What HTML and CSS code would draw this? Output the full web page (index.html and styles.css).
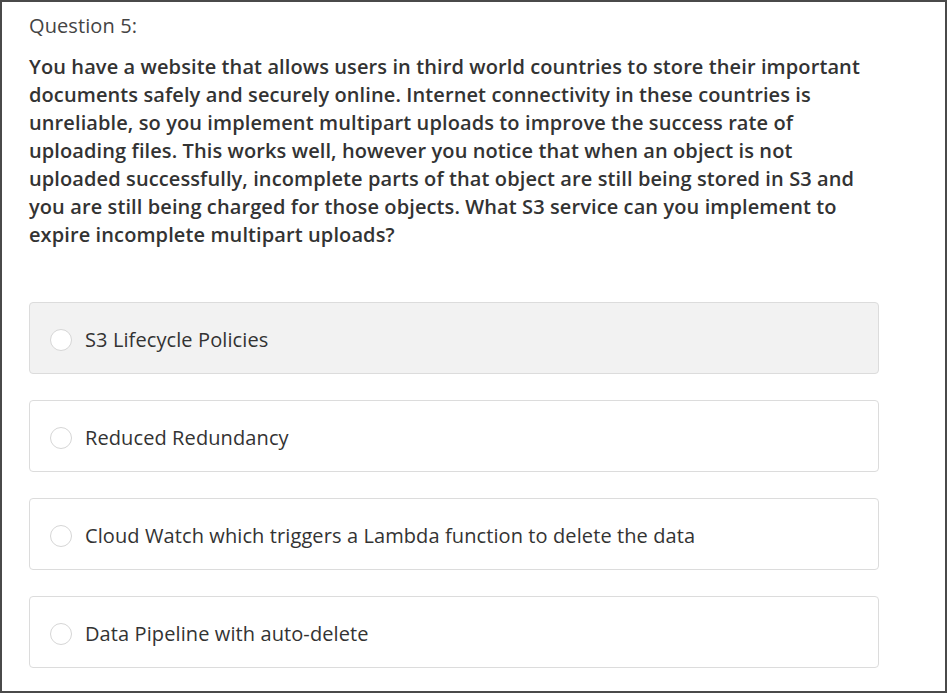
FILE: index.html
```html
<!DOCTYPE html>
<html lang="en">
<head>
<meta charset="utf-8">
<title>Question 5</title>
<link rel="stylesheet" href="styles.css">
</head>
<body>
<div class="frame">
  <div class="question">
    <div class="q-label">Question 5:</div>
    <p class="q-text">You have a website that allows users in third world countries to store their important documents safely and securely online. Internet connectivity in these countries is unreliable, so you implement multipart uploads to improve the success rate of uploading files. This works well, however you notice that when an object is not uploaded successfully, incomplete parts of that object are still being stored in S3 and you are still being charged for those objects. What S3 service can you implement to expire incomplete multipart uploads?</p>
    <div class="options">
      <label class="option hover"><span class="radio"></span><span class="opt-text">S3 Lifecycle Policies</span></label>
      <label class="option"><span class="radio"></span><span class="opt-text">Reduced Redundancy</span></label>
      <label class="option"><span class="radio"></span><span class="opt-text">Cloud Watch which triggers a Lambda function to delete the data</span></label>
      <label class="option"><span class="radio"></span><span class="opt-text">Data Pipeline with auto-delete</span></label>
    </div>
  </div>
</div>
</body>
</html>
```
FILE: styles.css
```css
html, body {
  margin: 0;
  padding: 0;
  background: #ffffff;
}
body {
  font-family: "Open Sans", "Liberation Sans", sans-serif;
  color: #333333;
  letter-spacing: 0.1px;
}
.frame {
  box-sizing: border-box;
  width: 947px;
  height: 693px;
  border: 2px solid #4a4a4a;
  overflow: hidden;
}
.question {
  padding: 11px 66px 0 27px;
}
.q-label {
  font-size: 20px;
  line-height: 26px;
  color: #444444;
}
.q-text {
  margin: 14px 0 0 0;
  font-size: 20px;
  line-height: 28px;
  font-weight: 600;
  color: #333333;
  width: 850px;
}
.options {
  margin-top: 53px;
  display: flex;
  flex-direction: column;
  gap: 26px;
  width: 850px;
}
.option {
  box-sizing: border-box;
  height: 72px;
  border: 1px solid #dcdcdc;
  border-radius: 4px;
  display: flex;
  align-items: center;
  padding-left: 20px;
  padding-top: 4px;
  background: #ffffff;
}
.option.hover {
  background: #f2f2f2;
}
.radio {
  box-sizing: border-box;
  width: 22px;
  height: 22px;
  border: 1px solid #d6d6d6;
  border-radius: 50%;
  background: #ffffff;
  flex: none;
  margin-right: 13px;
}
.opt-text {
  font-size: 20px;
  line-height: 26px;
  color: #333333;
}
```
